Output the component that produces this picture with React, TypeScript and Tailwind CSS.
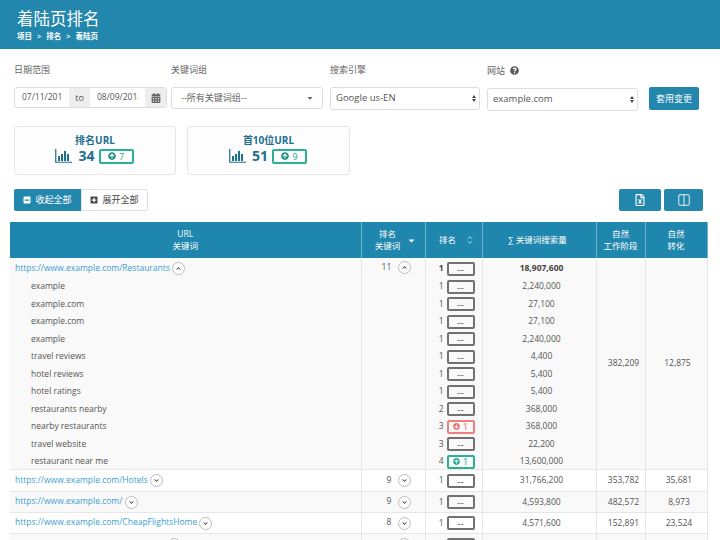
import React from 'react';
import { ChevronsUpDown, Columns2 } from 'lucide-react';
import {
  FaArrowCircleUp,
  FaArrowCircleDown,
  FaCalendarAlt,
  FaCaretDown,
  FaChevronDown,
  FaChevronUp,
  FaMinusSquare,
  FaPlusSquare,
  FaQuestionCircle,
  FaRegFileExcel,
} from 'react-icons/fa';

const keywords = [
  { name: 'example', rank: 1, volume: '2,240,000' },
  { name: 'example.com', rank: 1, volume: '27,100' },
  { name: 'example.com', rank: 1, volume: '27,100' },
  { name: 'example', rank: 1, volume: '2,240,000' },
  { name: 'travel reviews', rank: 1, volume: '4,400' },
  { name: 'hotel reviews', rank: 1, volume: '5,400' },
  { name: 'hotel ratings', rank: 1, volume: '5,400' },
  { name: 'restaurants nearby', rank: 2, volume: '368,000' },
  { name: 'nearby restaurants', rank: 3, volume: '368,000', down: 1 },
  { name: 'travel website', rank: 3, volume: '22,200' },
  { name: 'restaurant near me', rank: 4, volume: '13,600,000', up: 1 },
];

const pages = [
  { url: 'https://www.example.com/Hotels', count: 9, volume: '31,766,200', sessions: '353,782', conv: '35,681', height: 'h-[22px]', bg: 'bg-white' },
  { url: 'https://www.example.com/', count: 9, volume: '4,593,800', sessions: '482,572', conv: '8,973', height: 'h-[21px]', bg: 'bg-[#f9f9f9]' },
  { url: 'https://www.example.com/CheapFlightsHome', count: 8, volume: '4,571,600', sessions: '152,891', conv: '23,524', height: 'h-[21px]', bg: 'bg-white' },
];

const BarsIcon = () => (
  <svg width="17" height="14" viewBox="0 0 17 14" fill="none" stroke="#1d6f8d" className="shrink-0">
    <path d="M0.75 0v13.25H17" strokeWidth="1.2" />
    <path d="M4 7v5M7 5v7M10 2v10M13 5v7" strokeWidth="2" />
  </svg>
);

const Toggle = ({ open }: { open?: boolean }) => (
  <span className="inline-flex w-[13px] h-[13px] items-center justify-center rounded-full border border-[#bdbdbd] bg-white text-[#333] align-middle">
    {open ? <FaChevronUp size={5} /> : <FaChevronDown size={5} />}
  </span>
);

const Change = ({ up, down, blank }: { up?: number; down?: number; blank?: boolean }) => {
  if (up)
    return (
      <span className="inline-flex w-[28px] h-[14px] items-center justify-center gap-[3px] rounded-[2px] border-2 border-[#2bb094] text-[9.5px] leading-none text-[#22ab8e]">
        <FaArrowCircleUp size={7} />
        {up}
      </span>
    );
  if (down)
    return (
      <span className="inline-flex w-[28px] h-[14px] items-center justify-center gap-[3px] rounded-[2px] border-2 border-[#f07f7f] text-[9.5px] leading-none text-[#ef6a6a]">
        <FaArrowCircleDown size={7} />
        {down}
      </span>
    );
  return (
    <span className="inline-flex w-[28px] h-[14px] items-center justify-center rounded-[2px] border-2 border-[#717171] text-[10px] leading-none text-[#666]">
      {blank ? '' : '--'}
    </span>
  );
};

const Updown = () => (
  <span className="flex flex-col gap-[1px] text-[#444]">
    <span className="w-0 h-0 border-x-[2.5px] border-x-transparent border-b-[3px] border-b-[#444]" />
    <span className="w-0 h-0 border-x-[2.5px] border-x-transparent border-t-[3px] border-t-[#444]" />
  </span>
);

const Rank = ({ rank, up, down, bold }: { rank: number; up?: number; down?: number; bold?: boolean }) => (
  <div className="flex items-center justify-end gap-[3px] pr-[7px]">
    <span className={bold ? 'font-bold text-[#444]' : ''}>{rank}</span>
    <Change up={up} down={down} />
  </div>
);

const StatCard = ({ title, value, delta, width }: { title: string; value: number; delta: number; width: string }) => (
  <div className={`${width} h-[49px] flex flex-col items-center justify-center pb-[3px] rounded-[3px] border border-[#e6e6e6] bg-[#fdfdfd]`}>
    <div className="text-[10px] leading-[14px] font-bold text-[#1d6f8d]">{title}</div>
    <div className="flex items-center leading-[18px] pr-[1px]">
      <BarsIcon />
      <span className="ml-[6px] text-[14px] font-bold text-[#1d6f8d]">{value}</span>
      <span className="ml-[4px] inline-flex w-[35px] h-[15px] items-center justify-center gap-[3px] rounded-[2px] border-2 border-[#2bb094] text-[9px] leading-none text-[#22ab8e]">
        <FaArrowCircleUp size={8} className="text-[#1d8f80]" />
        {delta}
      </span>
    </div>
  </div>
);

const headCell = 'border-r border-[#6fb3cd] font-normal text-[8.5px] leading-[12px] text-white align-middle text-center';
const bodyCell = 'border-r border-[#e6e6e6] p-0';

export default function App() {
  return (
    <div className="w-[720px] h-[540px] overflow-hidden bg-white text-[#555] font-['Open_Sans','Noto_Sans_CJK_SC',sans-serif]">
      <header className="h-[49px] bg-[#2387ad] pl-[17px] pt-[9px] text-white">
        <h1 className="text-[16.5px] leading-[20px] font-normal">着陆页排名</h1>
        <div className="flex gap-[5px] text-[7.5px] leading-[11px] mt-[2px] font-bold">
          <span>项目</span>
          <span>&gt;</span>
          <span>排名</span>
          <span>&gt;</span>
          <span>着陆页</span>
        </div>
      </header>

      <div className="flex pl-[14px] pt-[15px]">
        <div className="w-[153px]">
          <div className="text-[9px] leading-[12px] h-[23px] text-[#666]">日期范围</div>
          <div className="flex h-[21px] rounded-[3px] border border-[#ddd] text-[8.5px] overflow-hidden">
            <input readOnly value="07/11/2018" className="w-[54px] px-[7px] outline-none text-[#555]" />
            <span className="w-[21px] flex items-center justify-center bg-[#eee] text-[#555] text-[9px]">to</span>
            <input readOnly value="08/09/2018" className="w-[55px] px-[7px] outline-none text-[#555]" />
            <span className="flex-1 flex items-center justify-center bg-[#eee] text-[#666]">
              <FaCalendarAlt size={10} />
            </span>
          </div>
        </div>
        <div className="w-[152px] ml-[4px]">
          <div className="text-[9px] leading-[12px] h-[23px] text-[#666]">关键词组</div>
          <div className="flex h-[22px] items-center justify-between rounded-[3px] border border-[#ddd] pl-[9px] pr-[8px] text-[9px] text-[#666]">
            --所有关键词组--
            <FaCaretDown size={8} />
          </div>
        </div>
        <div className="w-[150px] ml-[7px]">
          <div className="text-[9px] leading-[12px] h-[23px] text-[#666]">搜索引擎</div>
          <div className="flex h-[23px] items-center justify-between rounded-[3px] border border-[#ddd] pl-[5px] pr-[3px] text-[9.5px] text-[#555]">
            Google us-EN
            <Updown />
          </div>
        </div>
        <div className="w-[151px] ml-[7px]">
          <div className="flex gap-[5px] text-[9px] leading-[12px] h-[24px] pt-[1px] text-[#666]">
            网站
            <FaQuestionCircle size={9} className="text-[#555] mt-[1px]" />
          </div>
          <div className="flex h-[23px] items-center justify-between rounded-[3px] border border-[#ddd] pl-[5px] pr-[3px] text-[9.5px] text-[#555]">
            example.com
            <Updown />
          </div>
        </div>
        <button className="w-[50px] h-[23px] mt-[23px] ml-[11px] rounded-[2px] bg-[#2387ad] text-[9px] text-white">套用变更</button>
      </div>

      <div className="flex gap-[11px] pl-[14px] mt-[15px]">
        <StatCard title="排名URL" value={34} delta={7} width="w-[162px]" />
        <StatCard title="首10位URL" value={51} delta={9} width="w-[163px]" />
      </div>

      <div className="flex justify-between pl-[14px] pr-[17px] mt-[14px]">
        <div className="flex h-[22px] text-[9px]">
          <button className="w-[67px] flex items-center justify-center gap-[4px] rounded-l-[2px] bg-[#2387ad] text-white">
            <FaMinusSquare size={8} />
            收起全部
          </button>
          <button className="w-[67px] flex items-center justify-center gap-[4px] rounded-r-[2px] border border-[#e2e2e2] text-[#444]">
            <FaPlusSquare size={8} />
            展开全部
          </button>
        </div>
        <div className="flex gap-[3px]">
          <button className="w-[42px] h-[22px] flex items-center justify-center rounded-[2px] bg-[#2387ad] text-white">
            <FaRegFileExcel size={12} />
          </button>
          <button className="w-[39px] h-[22px] flex items-center justify-center rounded-[2px] bg-[#2387ad] text-white">
            <Columns2 size={14} strokeWidth={1.5} />
          </button>
        </div>
      </div>

      <div className="pl-[10px] mt-[11px]">
        <table className="w-[697px] table-fixed border-collapse text-[8.5px]">
          <colgroup>
            <col className="w-[351px]" />
            <col className="w-[64px]" />
            <col className="w-[57px]" />
            <col className="w-[114px]" />
            <col className="w-[49px]" />
            <col className="w-[62px]" />
          </colgroup>
          <thead>
            <tr className="h-[36px] bg-[#1f86ad]">
              <th className={headCell}>URL<br />关键词</th>
              <th className={headCell}>
                <div className="flex items-center justify-center gap-[7px] pl-[5px]">
                  <span>排名<br />关键词</span>
                  <FaCaretDown size={9} />
                </div>
              </th>
              <th className={headCell}>
                <div className="flex items-center justify-center gap-[9px] pl-[7px]">
                  排名
                  <ChevronsUpDown size={10} className="text-[#cfe6ef]" />
                </div>
              </th>
              <th className={`${headCell} pr-[3px]`}>∑ 关键词搜索量</th>
              <th className={headCell}>自然<br />工作阶段</th>
              <th className={headCell}>自然<br />转化</th>
            </tr>
          </thead>
          <tbody className="bg-[#f9f9f9]">
            <tr className="h-[19px]">
              <td className={`${bodyCell} pl-[5px] pt-[2px]`}>
                <a className="text-[#3c9fd0]">https://www.example.com/Restaurants</a> <Toggle open />
              </td>
              <td rowSpan={12} className={`${bodyCell} align-top text-right pr-[14px] pt-[3px]`}>
                11 <span className="ml-[4px]"><Toggle open /></span>
              </td>
              <td className={`${bodyCell} pt-[2px]`}><Rank rank={1} bold /></td>
              <td className={`${bodyCell} pt-[2px] pl-[5px] text-center font-bold text-[#444]`}>18,907,600</td>
              <td rowSpan={12} className={`${bodyCell} pl-[6px] text-center`}>382,209</td>
              <td rowSpan={12} className={`${bodyCell} pl-[3px] text-center`}>12,875</td>
            </tr>
            {keywords.map((k, i) => (
              <tr key={i} className="h-[17.5px]">
                <td className={`${bodyCell} pt-[2px] pl-[21px]`}>{k.name}</td>
                <td className={`${bodyCell} pt-[2px]`}><Rank rank={k.rank} up={k.up} down={k.down} /></td>
                <td className={`${bodyCell} pt-[2px] pl-[5px] text-center`}>{k.volume}</td>
              </tr>
            ))}
            {pages.map((p) => (
              <tr key={p.url} className={`${p.height} ${p.bg} border-t border-[#e6e6e6]`}>
                <td className={`${bodyCell} pl-[5px]`}>
                  <a className="text-[#3c9fd0]">{p.url}</a> <Toggle />
                </td>
                <td className={`${bodyCell} text-right pr-[14px]`}>
                  {p.count} <span className="ml-[4px]"><Toggle /></span>
                </td>
                <td className={bodyCell}><Rank rank={1} /></td>
                <td className={`${bodyCell} pl-[5px] text-center`}>{p.volume}</td>
                <td className={`${bodyCell} pl-[6px] text-center`}>{p.sessions}</td>
                <td className={`${bodyCell} pl-[6px] text-center`}>{p.conv}</td>
              </tr>
            ))}
            {/* last row is cut by the window, only the top of its controls shows */}
            <tr className="h-[22px] bg-[#f9f9f9] border-t border-[#e6e6e6]">
              <td className={`${bodyCell} pl-[5px]`}>
                <span className="inline-block w-[153px]" />
                <Toggle />
              </td>
              <td className={`${bodyCell} text-right pr-[14px]`}><Toggle /></td>
              <td className={bodyCell}>
                <div className="flex justify-end pr-[7px]"><Change blank /></div>
              </td>
              <td className={bodyCell} />
              <td className={bodyCell} />
              <td className={bodyCell} />
            </tr>
          </tbody>
        </table>
      </div>
    </div>
  );
}
